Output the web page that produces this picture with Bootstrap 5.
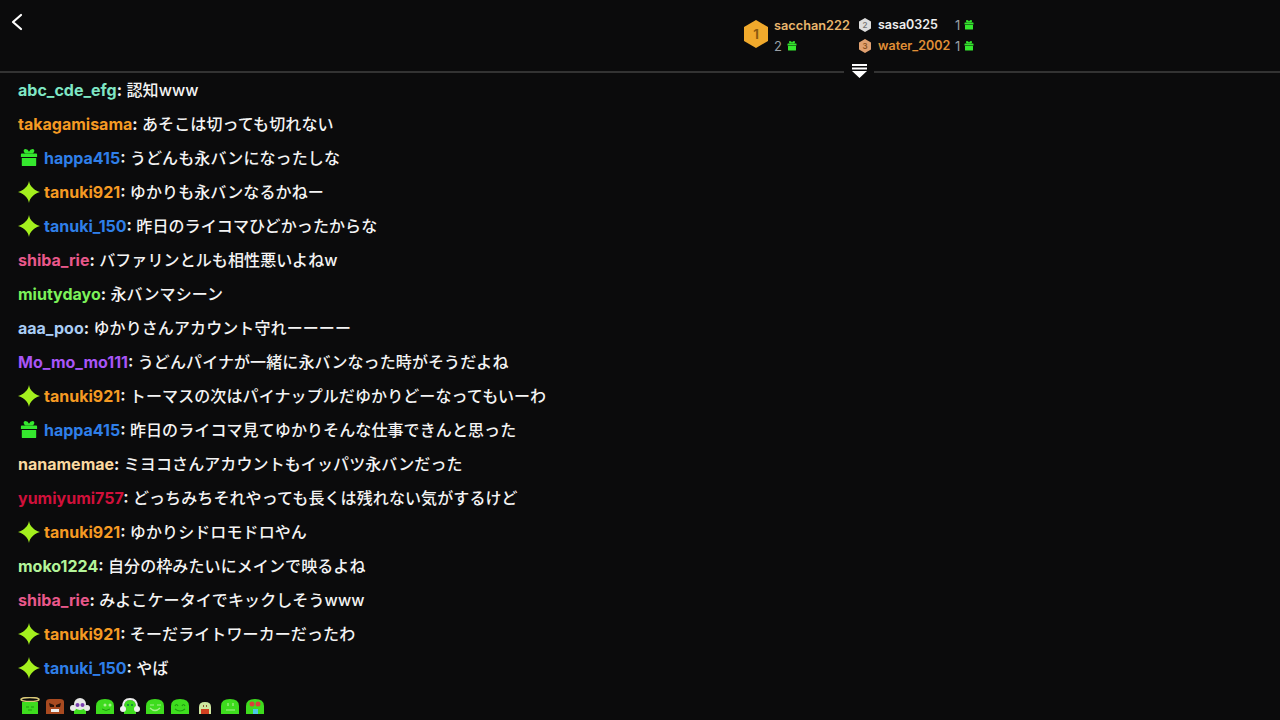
<!DOCTYPE html>
<html lang="ja">
<head>
  <meta charset="UTF-8" />
  <title>Chat</title>
  <link href="https://cdn.jsdelivr.net/npm/bootstrap@5.3.0/dist/css/bootstrap.min.css" rel="stylesheet" />
  <style>
    html, body { height: 720px; overflow: hidden; }
    body { background: #0b0b0c; color: #f4f4f4; font-family: Inter, "Noto Sans CJK JP", sans-serif; }
    .top-area { height: 71px; padding-left: 9px; }
    .back-btn { width: 16px; height: 18px; margin-top: 13px; }
    .rank-box { margin-left: 718px; padding-top: 15px; }
    .rank-first { width: 84px; margin-left: 1px; }
    .rank-first .who { font-size: 12.75px; line-height: 22px; font-weight: 600; color: #e8b56d; }
    .rank-num { font-size: 13px; line-height: 18px; color: #9aa0a6; gap: 5px; }
    .rank-rest { width: 122px; font-size: 12.5px; font-weight: 600; line-height: 21px; margin-top: -1px; }
    .rank-rest .who { width: 77px; margin-left: 2px; }
    .white-name { color: #eee; }
    .bronze-name { color: #e08f36; }
    .top-line { height: 2px; background: #333; }
    .scroll-mark { width: 30px; height: 14px; background: #0b0b0c; margin: -9px 0 -5px 844px; position: relative; }
    .chat-list { padding: 0 0 0 18px; font-size: 16px; font-weight: 500; letter-spacing: .1px; }
    .chat-row { height: 34px; line-height: 34px; white-space: nowrap; }
    .chat-row svg { margin-right: 4px; flex-shrink: 0; }
    .chat-row svg.gift-row { margin-left: 2px; margin-right: 6px; }
    .chat-name { font-weight: 700; letter-spacing: 0; }
    .c-teal { color: #7fe6c4; } .c-orange { color: #f59a23; } .c-blue { color: #2f7fe8; }
    .c-pink { color: #e8588a; } .c-lime { color: #7cf25a; } .c-sky { color: #a9cdf5; }
    .c-purple { color: #a855f7; } .c-cream { color: #fbd9a0; } .c-red { color: #d0103a; } .c-mint { color: #b4f59a; }
    .emote-bar { padding-left: 20px; margin-top: 12px; gap: 5px; height: 17px; overflow: hidden; }
  </style>
</head>
<body>
  <svg width="0" height="0" class="position-absolute">
    <defs>
      <symbol id="gift" viewBox="0 0 20 20"><path fill="#35e82e" d="M1 6q0-1 1-1h16q1 0 1 1v3H1zM2 10h16v8q0 1-1 1H3q-1 0-1-1z"/><path fill="#35e82e" d="M4 2q0-2 2-2 3 0 4 3 1-3 4-3 2 0 2 2 0 2-2 3H6Q4 4 4 2z"/></symbol>
      <symbol id="star" viewBox="0 0 24 24"><path fill="#a4f01e" d="M12 0c1 6 5 10 12 12-7 2-11 6-12 12-1-6-5-10-12-12 7-2 11-6 12-12z"/><path fill="#a4f01e" d="M12 3.500 20.500 12 12 20.500 3.500 12z"/></symbol>
    </defs>
  </svg>

  <div class="top-area d-flex">
    <svg class="back-btn flex-shrink-0" viewBox="0 0 16 18"><path d="M12 2 4 9l8 7" fill="none" stroke="#fff" stroke-width="2.2" stroke-linecap="round" stroke-linejoin="round"/></svg>
    <div class="rank-box d-flex">
      <svg width="26" height="30" viewBox="0 0 26 30" class="flex-shrink-0 mt-1 me-1"><path fill="#f0a92c" d="M13 1 25 8v14l-12 7-12-7V8z"/><text x="13" y="20" text-anchor="middle" font-size="13" font-weight="700" fill="#8a5a10">1</text></svg>
      <div class="rank-first">
        <div class="who">sacchan222</div>
        <div class="rank-num d-flex align-items-center">2 <svg width="10" height="10"><use href="#gift"/></svg></div>
      </div>
      <div class="rank-rest">
        <div class="d-flex align-items-center">
          <svg width="14" height="16" viewBox="0 0 14 16" class="me-1 flex-shrink-0"><path fill="#ddd" d="M7 1l6 3.5v7L7 15l-6-3.5v-7z"/><text x="7" y="11" text-anchor="middle" font-size="8" fill="#777">2</text></svg>
          <span class="who white-name">sasa0325</span>
          <span class="rank-num fw-normal">1</span><svg class="ms-1" width="10" height="10"><use href="#gift"/></svg>
        </div>
        <div class="d-flex align-items-center">
          <svg width="14" height="16" viewBox="0 0 14 16" class="me-1 flex-shrink-0"><path fill="#e0a070" d="M7 1l6 3.5v7L7 15l-6-3.5v-7z"/><text x="7" y="11" text-anchor="middle" font-size="8" fill="#8a5020">3</text></svg>
          <span class="who bronze-name">water_2002</span>
          <span class="rank-num fw-normal">1</span><svg class="ms-1" width="10" height="10"><use href="#gift"/></svg>
        </div>
      </div>
    </div>
  </div>
  <div class="top-line"></div>
  <div class="scroll-mark d-flex justify-content-center"><svg class="d-block" width="15" height="14" viewBox="0 0 15 14"><path fill="#fff" d="M0 0h15v2H0zM0 3.500h15v2H0zM0 7h15l-7.500 7z"/></svg></div>

  <div class="chat-list" id="chatList"></div>

  <div class="emote-bar d-flex" id="emoteBar"></div>

  <script>
    const filas = [
      ["", "c-teal", "abc_cde_efg", "認知www"],
      ["", "c-orange", "takagamisama", "あそこは切っても切れない"],
      ["gift", "c-blue", "happa415", "うどんも永バンになったしな"],
      ["star", "c-orange", "tanuki921", "ゆかりも永バンなるかねー"],
      ["star", "c-blue", "tanuki_150", "昨日のライコマひどかったからな"],
      ["", "c-pink", "shiba_rie", "バファリンとルも相性悪いよねw"],
      ["", "c-lime", "miutydayo", "永バンマシーン"],
      ["", "c-sky", "aaa_poo", "ゆかりさんアカウント守れーーーー"],
      ["", "c-purple", "Mo_mo_mo111", "うどんパイナが一緒に永バンなった時がそうだよね"],
      ["star", "c-orange", "tanuki921", "トーマスの次はパイナップルだゆかりどーなってもいーわ"],
      ["gift", "c-blue", "happa415", "昨日のライコマ見てゆかりそんな仕事できんと思った"],
      ["", "c-cream", "nanamemae", "ミヨコさんアカウントもイッパツ永バンだった"],
      ["", "c-red", "yumiyumi757", "どっちみちそれやっても長くは残れない気がするけど"],
      ["star", "c-orange", "tanuki921", "ゆかりシドロモドロやん"],
      ["", "c-mint", "moko1224", "自分の枠みたいにメインで映るよね"],
      ["", "c-pink", "shiba_rie", "みよこケータイでキックしそうwww"],
      ["star", "c-orange", "tanuki921", "そーだライトワーカーだったわ"],
      ["star", "c-blue", "tanuki_150", "やば"]
    ];
    document.getElementById("chatList").innerHTML = filas.map(f => {
      const esRegalo = f[0] === "gift";
      const tam = esRegalo ? 18 : 22;
      const icono = f[0] ? `<svg width="${tam}" height="${tam}" class="${esRegalo ? "gift-row" : ""}"><use href="#${f[0]}"/></svg>` : "";
      return `<div class="chat-row d-flex align-items-center">${icono}<span><span class="chat-name ${f[1]}">${f[2]}</span><span class="chat-name">:</span> ${f[3]}</span></div>`;
    }).join("");

    // green blobs, a few with hair or headphones
    const blob = '<path fill="#3edc1e" d="M1 18V9q0-7 9-7t9 7v9z"/>';
    const emotes = [
      '<ellipse cx="10" cy="2.500" rx="9" ry="2" fill="none" stroke="#d8c878" stroke-width="1.500"/><path fill="#3edc1e" d="M2 5h16v13H2z"/><path d="M6 10h3M11 10h3M8 13h4" stroke="#1f9a10" fill="none"/>',
      '<path fill="#a84a20" d="M1 5q0-3 4-3h10q4 0 4 3v13H1z"/><path fill="#2a1208" d="M4 6l5 2v2H5zM16 6l-5 2v2h4z"/><path fill="#eee" d="M6 12h8v3H6z"/>',
      '<path fill="#3edc1e" d="M4 18V8h12v10z"/><circle cx="10" cy="7" r="6" fill="#e8e8e8"/><circle cx="3" cy="11" r="3" fill="#e8e8e8"/><circle cx="17" cy="11" r="3" fill="#e8e8e8"/><circle cx="7.500" cy="8" r="2" fill="#7a3fb0"/><circle cx="12.500" cy="8" r="2" fill="#7a3fb0"/>',
      blob + '<circle cx="10" cy="8" r="1.500" fill="#a8f090"/><circle cx="15" cy="8" r="1.500" fill="#a8f090"/><path d="M7 12q4 3 8 0" stroke="#1f9a10" fill="none"/>',
      '<path fill="#3edc1e" d="M4 18V9q0-6 6-6t6 6v9z"/><path d="M3 10q0-8 7-8t7 8" fill="none" stroke="#eee" stroke-width="2"/><circle cx="3" cy="12" r="3" fill="#eee"/><circle cx="17" cy="12" r="3" fill="#eee"/><circle cx="8" cy="8" r="1" fill="#174"/><circle cx="12" cy="8" r="1" fill="#174"/>',
      blob + '<path d="M5 8h4M12 8h4M5 11q5 5 10 0" stroke="#a8f090" stroke-width="1.200" fill="none"/>',
      blob + '<path d="M5 9q1.500-3 3 0M12 9q1.500-3 3 0M5 12q5 4 10 0" stroke="#1f9a10" stroke-width="1.200" fill="none"/>',
      '<path fill="#cfe8a0" d="M4 18V10q0-5 6-5t6 5v8z"/><path fill="#d04020" d="M6 12h8v5H6z"/><path fill="#8a5a30" d="M8 8h1v2H8zM11 8h1v2h-1z"/>',
      blob + '<path d="M8 6v3M13 6v3M6 13h9" stroke="#a8f090" stroke-width="1.200" fill="none"/>',
      blob + '<circle cx="7" cy="7" r="2.500" fill="#d8433a"/><circle cx="13" cy="7" r="2.500" fill="#d8433a"/><path fill="#4ac8e8" d="M8 12h5v6H8z"/>'
    ];
    document.getElementById("emoteBar").innerHTML = emotes.map(e =>
      `<svg width="20" height="18" viewBox="0 0 20 18" class="flex-shrink-0">${e}</svg>`).join("");
  </script>
  <script src="https://cdn.jsdelivr.net/npm/bootstrap@5.3.0/dist/js/bootstrap.bundle.min.js"></script>
</body>
</html>
